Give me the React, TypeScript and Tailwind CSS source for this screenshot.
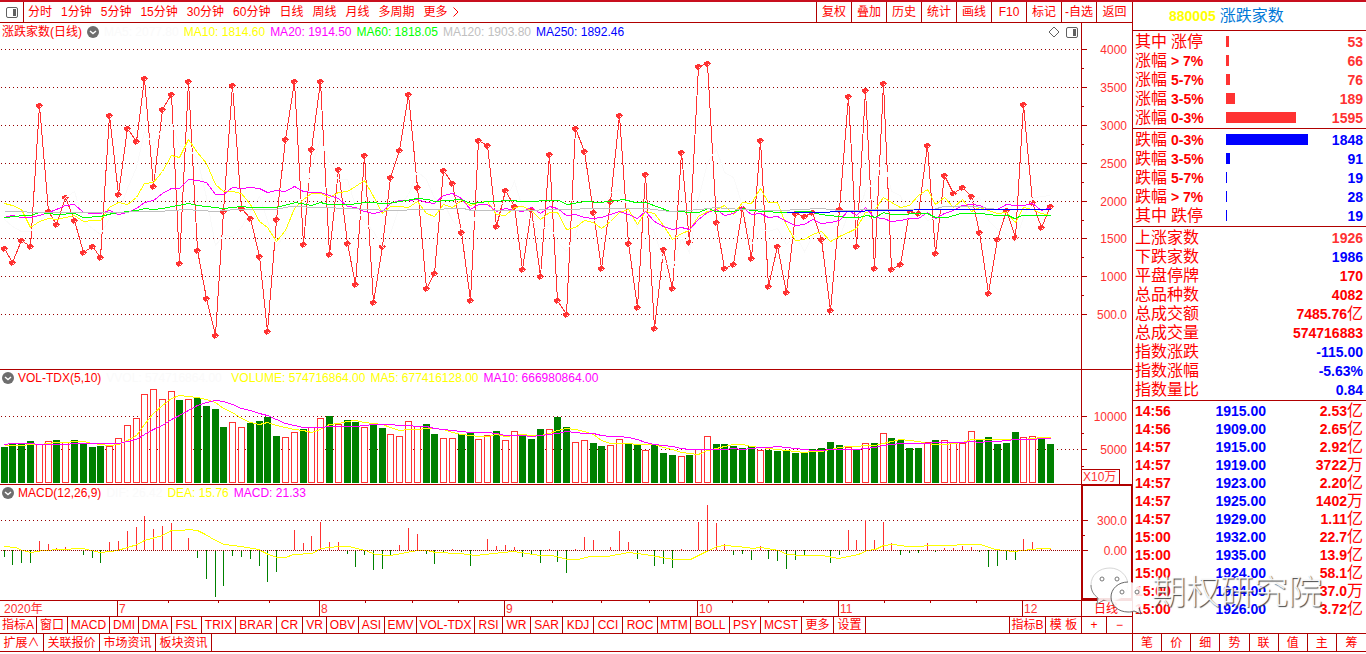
import React from "react";

const PRICE = [
  248, 262, 240, 246, 105, 211, 224, 197, 220, 252, 246, 257, 115, 194, 128, 141, 78, 186, 109, 94,
  263, 81, 250, 298, 335, 211, 85, 208, 218, 256, 331, 219, 139, 81, 244, 149, 81, 254, 169, 243,
  284, 155, 302, 246, 177, 150, 94, 187, 288, 273, 170, 183, 232, 300, 140, 145, 226, 190, 206, 269,
  209, 276, 154, 300, 314, 128, 151, 212, 268, 201, 115, 243, 307, 174, 328, 249, 288, 152, 242, 66,
  63, 222, 268, 264, 208, 258, 140, 286, 246, 292, 213, 216, 212, 239, 310, 209, 96, 246, 90, 268,
  83, 269, 264, 211, 213, 145, 253, 175, 193, 187, 196, 232, 293, 239, 210, 237, 104, 202, 227, 206,
];

const VOLUME =
  "G447 G444 G444 G441 R444 R441 G440 R442 G440 G444 G447 G446 R446 R438 R425 R418 R394 R389 R399 R391 " +
  "G400 R399 G398 G406 G409 G427 R422 R427 G423 G421 G417 G436 R437 R432 G429 R427 R418 G416 R424 G420 " +
  "G422 R427 G424 G428 R434 R436 R421 R426 G424 G434 R438 R438 G434 G433 R439 R435 G431 R440 R431 G435 " +
  "G439 G429 R429 G417 G427 R442 R440 G443 G446 R445 R439 G444 G444 R450 G445 G453 G455 R456 G455 R449 " +
  "R436 G444 G444 G446 G448 G446 R450 G450 G451 G451 G453 G453 G449 G448 G442 G445 R447 G449 R443 G443 " +
  "R433 G438 G440 G448 G448 R442 G440 R440 R443 R443 R431 G440 G437 G444 G443 G432 R437 R436 G438 G444";

const MACD = [
  578, 600, 596, 596, 528, 537, 549, 546, 556, 572, 581, 594, 531, 528, 498, 486, 453, 492, 483, 474,
  556, 519, 581, 644, 698, 665, 575, 578, 584, 605, 653, 623, 560, 495, 534, 513, 471, 531, 531, 567,
  608, 570, 617, 614, 575, 540, 489, 507, 567, 599, 563, 552, 563, 605, 556, 522, 543, 540, 546, 578,
  570, 596, 552, 593, 626, 552, 516, 525, 556, 546, 498, 531, 584, 556, 605, 599, 611, 552, 556, 471,
  420, 474, 537, 570, 567, 587, 543, 584, 590, 614, 587, 570, 556, 560, 596, 570, 495, 525, 465, 525,
  471, 534, 570, 566, 566, 534, 563, 549, 549, 543, 546, 563, 608, 605, 587, 587, 522, 531, 549, 553,
].map((v) => Math.round((v - 556) / 3));

const MA60 =
  "4,217 15,216 22,215 30,215 39,212 57,214 74,213 83,217 100,216 112,213 127,211 137,210 144,208 153,209 162,208 188,203 197,205 223,208 241,206 250,207 276,207 295,202 311,205 320,202 328,204 350,204 364,202 388,203 417,198 428,199 434,201 460,199 471,203 488,201 513,200 519,201 558,200 567,204 585,201 600,202 623,199 635,202 645,202 670,211 698,212 708,208 715,211 733,211 743,208 750,210 780,212 810,211 820,214 847,217 858,217 867,215 875,217 883,212 890,214 927,213 935,217 947,217 960,213 980,213 997,215 1008,215 1014,218 1022,215 1050,215";
const MA120 =
  "4,211 22,211 30,212 100,212 158,211 185,209 215,211 235,209 275,209 290,206 320,207 350,208 388,210 463,208 471,210 518,210 600,208 645,208 670,211 700,209 715,207 725,208 743,209 780,210 800,209 820,208 840,210 880,209 933,209 943,206 973,206 997,209 1050,209";
const MA250 = "786,212 800,212 860,211 870,210 958,209 1050,209";
const DEA =
  "4,546 15,547 22,550 31,552 43,550 60,549 82,548 100,552 110,551 117,550 127,547 137,544 144,540 162,535 171,530 182,530 187,529 197,530 205,534 215,540 224,544 240,546 258,549 268,554 277,557 285,557 293,554 312,553 320,548 338,546 348,546 365,550 375,554 390,555 417,550 427,550 435,552 460,553 475,555 493,553 513,551 540,555 552,555 567,559 577,559 590,556 607,556 628,552 645,554 673,559 690,559 708,550 717,546 725,545 747,547 752,548 760,547 778,550 787,554 802,555 822,555 838,558 858,554 867,550 875,549 883,545 893,544 907,546 920,546 928,545 953,545 960,544 980,544 995,549 1013,551 1040,548 1050,548";

const xAt = (i: number) => Math.round(3.7 + i * 8.79);
const toPoints = (ys: number[]) => ys.map((y, i) => `${xAt(i)},${Math.round(y)}`).join(" ");
const average = (ys: number[], n: number, head: number[]) =>
  ys.map((_, i) => (i < n - 1 ? head[Math.min(i, head.length - 1)] : ys.slice(i - n + 1, i + 1).reduce((a, b) => a + b, 0) / n));

const bars = VOLUME.split(" ").map((s) => ({ up: s[0] === "R", y: Number(s.slice(1)) }));
const volY = bars.map((b) => b.y);

const priceMa5 = toPoints(average(PRICE, 5, [219, 226, 231, 231]));
const priceMa10 = toPoints(average(PRICE, 10, [203, 205, 209, 227, 221, 218, 219, 217, 215]));
const priceMa20 = toPoints(
  average(PRICE, 20, [217, 215, 217, 217, 215, 212, 209, 205, 204, 212, 213, 213, 210, 214, 212, 208, 202, 200, 193]),
);
const volMa5 = toPoints(average(volY, 5, [445, 445, 445, 444]));
const volMa10 = toPoints(average(volY, 10, [444, 443, 443, 443, 444, 444, 444, 444, 443]));

const periods = ["分时", "1分钟", "5分钟", "15分钟", "30分钟", "60分钟", "日线", "周线", "月线", "多周期", "更多"];
const tools = ["复权", "叠加", "历史", "统计", "画线", "F10", "标记", "-自选"];

const indicators: [string, string][] = [
  ["指标A", "w-[37px]"], ["窗口", "w-[31px]"], ["MACD", "w-[42px]"], ["DMI", "w-[29px]"], ["DMA", "w-[33px]"],
  ["FSL", "w-[30px]"], ["TRIX", "w-[34px]"], ["BRAR", "w-[41px]"], ["CR", "w-[26px]"], ["VR", "w-[24px]"],
  ["OBV", "w-[32px]"], ["ASI", "w-[26px]"], ["EMV", "w-[32px]"], ["VOL-TDX", "w-[58px]"], ["RSI", "w-[28px]"],
  ["WR", "w-[28px]"], ["SAR", "w-[32px]"], ["KDJ", "w-[31px]"], ["CCI", "w-[29px]"], ["ROC", "w-[35px]"],
  ["MTM", "w-[33px]"], ["BOLL", "w-[39px]"], ["PSY", "w-[31px]"], ["MCST", "w-[41px]"], ["更多", "w-[32px]"],
  ["设置", "w-[32px]"],
];

const rises = [
  ["其中", "涨停", "53", "w-[3px]"],
  ["涨幅", "> 7%", "66", "w-[3px]"],
  ["涨幅", "5-7%", "76", "w-[4px]"],
  ["涨幅", "3-5%", "189", "w-[9px]"],
  ["涨幅", "0-3%", "1595", "w-[70px]"],
];
const falls = [
  ["跌幅", "0-3%", "1848", "w-[82px]"],
  ["跌幅", "3-5%", "91", "w-[4px]"],
  ["跌幅", "5-7%", "19", "w-px"],
  ["跌幅", "> 7%", "28", "w-px"],
  ["其中", "跌停", "19", "w-px"],
];
const totals = [
  ["上涨家数", "1926", "", "text-[#ff3232]"],
  ["下跌家数", "1986", "", "text-[#0000ff]"],
  ["平盘停牌", "170", "", "text-[#ff0000]"],
  ["总品种数", "4082", "", "text-[#ff0000]"],
  ["总成交额", "7485.76", "亿", "text-[#ff0000]"],
  ["总成交量", "574716883", "", "text-[#ff0000]"],
  ["指数涨跌", "-115.00", "", "text-[#0000ff]"],
  ["指数涨幅", "-5.63%", "", "text-[#0000ff]"],
  ["指数量比", "0.84", "", "text-[#0000ff]"],
];
const ticks = [
  ["14:56", "1915.00", "2.53", "亿"], ["14:56", "1909.00", "2.65", "亿"], ["14:57", "1915.00", "2.92", "亿"],
  ["14:57", "1919.00", "3722", "万"], ["14:57", "1923.00", "2.20", "亿"], ["14:57", "1925.00", "1402", "万"],
  ["14:57", "1929.00", "1.11", "亿"], ["15:00", "1932.00", "22.7", "亿"], ["15:00", "1935.00", "13.9", "亿"],
  ["15:00", "1924.00", "58.1", "亿"], ["15:00", "1924.00", "37.0", "万"], ["15:00", "1926.00", "3.72", "亿"],
];

const months: [number, string][] = [[117, "7"], [319, "8"], [504, "9"], [697, "10"], [838, "11"], [1022, "12"]];
const weeks = [168, 218, 269, 365, 412, 458, 552, 601, 649, 732, 768, 803, 884, 930, 976];

function PanelIcon() {
  return (
    <svg width="12" height="11" viewBox="0 0 12 11" aria-hidden="true">
      <rect x="0.5" y="0.5" width="11" height="10" rx="1.5" fill="#fff" stroke="#606060" />
      <rect x="7" y="2" width="3" height="7" fill="#606060" />
    </svg>
  );
}

function CollapseButton({ label }: { label: string }) {
  return (
    <button aria-label={label} className="flex shrink-0">
      <svg width="12" height="12" viewBox="0 0 12 12" aria-hidden="true">
        <circle cx="6" cy="6" r="6" fill="#6e6e6e" />
        <path d="M3 5l3 2.6L9 5" fill="none" stroke="#fff" strokeWidth="1.4" />
      </svg>
    </button>
  );
}

function Grid({ y, dash = "1 3" }: { y: number; dash?: string }) {
  return <line x1="1" x2="1081" y1={y + 0.5} y2={y + 0.5} stroke="#960000" strokeDasharray={dash} />;
}

function Line({ points, className }: { points: string; className: string }) {
  return <polyline points={points} fill="none" className={className} transform="translate(0.5 0.5)" />;
}

type AxisProps = { top: number; height: number; labelX?: number; major: [number, string][]; minor: number[] };

function Axis({ top, height, labelX = 45, major, minor }: AxisProps) {
  return (
    <svg width="48" height={height} viewBox={`0 ${top} 48 ${height}`} className="block shrink-0 fill-[#ff3232] text-[12px]">
      {major.map(([y, t]) => (
        <g key={t}>
          <rect x="0" y={y} width="5" height="1" fill="#b00000" />
          <text x={labelX} y={y + 5} textAnchor="end">{t}</text>
        </g>
      ))}
      {minor.map((y) => (
        <rect key={y} x="0" y={y} width="2" height="1" fill="#b00000" />
      ))}
    </svg>
  );
}

function Spread({ rows, bar, value }: { rows: string[][]; bar: string; value: string }) {
  return (
    <ul className="border-b border-[#b00000] py-px">
      {rows.map(([group, range, count, width]) => (
        <li key={group + range} className="flex h-[19px] items-center pr-[3px] pl-[2px]">
          <span className="flex w-[91px] items-center gap-[4px] text-[16px]">
            {group}
            {range.includes("%") ? <b className="text-[14px]">{range}</b> : <span>{range}</span>}
          </span>
          <span className={`h-[11px] ${width} ${bar}`} />
          <b className={`ml-auto text-[14px] ${value}`}>{count}</b>
        </li>
      ))}
    </ul>
  );
}

function Watermark() {
  return (
    <div className="pointer-events-none absolute right-[44px] bottom-[37px] flex items-center gap-[6px]">
      <svg width="56" height="48" viewBox="0 0 56 48" className="mb-[2px]" aria-hidden="true">
        <path
          d="M20 1C9 1 1 8 1 18c0 6 3 10 7 13l-1 6 7-4c2 1 4 1 6 1 10 0 18-7 18-16S30 1 20 1z"
          fill="#fff" fillOpacity="0.88" stroke="#c4c4c4" strokeWidth="0.7"
        />
        <path d="M1 18c0 6 3 10 7 13l-1 6 7-4" fill="none" stroke="#777" strokeWidth="0.8" />
        <path
          d="M38 15c-10 0-17 7-17 15s7 15 17 15c2 0 4 0 6-1l7 3-2-6c3-3 5-6 5-11 0-8-6-15-16-15z"
          fill="#fff" fillOpacity="0.88"
        />
        <path d="M38 15c-10 0-17 7-17 15s7 15 17 15c2 0 4 0 6-1l7 3-2-6" fill="none" stroke="#555" strokeWidth="0.9" />
        <g fill="#fff" stroke="#777" strokeWidth="1">
          <circle cx="12" cy="12" r="2" />
          <circle cx="27" cy="12" r="2" />
          <circle cx="32" cy="25" r="2" />
          <circle cx="47" cy="25" r="2" />
        </g>
      </svg>
      <span className="text-[34px] leading-[48px] font-light text-white/90 [text-shadow:1px_1px_1px_#444]">期权研究院</span>
    </div>
  );
}

export default function App() {
  return (
    <div className="relative flex min-h-screen flex-col bg-white font-['Liberation_Sans','Noto_Sans_CJK_SC',sans-serif] text-[12px] leading-[16px] whitespace-nowrap text-[#ff0000]">
      <div className="h-[2px] bg-[#c80f1e]" />
      <div className="relative flex">
        <main className="min-w-0 flex-1">
          <nav className="flex h-[21px] border-b border-[#b00000]">
            <button aria-label="侧栏" className="flex w-[24px] items-center justify-center border-r border-[#b00000]">
              <PanelIcon />
            </button>
            <div className="flex flex-1 items-center gap-[9px] pl-[4px]">
              {periods.map((p) => (
                <button key={p}>{p}</button>
              ))}
              <svg width="6" height="10" viewBox="0 0 6 10" className="-ml-[4px]" aria-hidden="true">
                <path d="M0.5 0.5L5 5L0.5 9.5" fill="none" stroke="#ff0000" />
              </svg>
            </div>
            {tools.map((t) => (
              <button key={t} className="w-[35px] border-l border-[#b00000]">{t}</button>
            ))}
            <button className="w-[36px] border-l border-[#b00000]">返回</button>
          </nav>

          <section className="flex border-b border-[#b00000]">
            <div className="min-w-0 flex-1 border-r border-[#b00000]">
              <header className="flex h-[18px] items-center gap-[5px] pr-[3px] pl-[2px]">
                <h2>涨跌家数(日线)</h2>
                <CollapseButton label="收起涨跌家数" />
                <span className="text-[#fafafa]">MA5: 2077.80</span>
                <span className="text-[#ffff00]">MA10: 1814.60</span>
                <span className="text-[#ff00ff]">MA20: 1914.50</span>
                <span className="text-[#00ff00]">MA60: 1818.05</span>
                <span className="text-[#c0c0c0]">MA120: 1903.80</span>
                <span className="text-[#0000ff]">MA250: 1892.46</span>
                <svg width="12" height="12" viewBox="0 0 12 12" className="ml-auto" aria-hidden="true">
                  <path d="M6 1L11 6L6 11L1 6Z" fill="none" stroke="#606060" />
                </svg>
                <span className="ml-px"><PanelIcon /></span>
              </header>
              <svg viewBox="0 41 1081 328" preserveAspectRatio="none" shapeRendering="crispEdges" className="block h-[328px] w-full">
                {[49, 87, 125, 163, 201, 238, 276, 314].map((y) => <Grid key={y} y={y} />)}
                <Line points={toPoints(PRICE)} className="stroke-[#ff3232]" />
                {PRICE.map((y, i) => (
                  <g key={i}>
                    <path d={`M${xAt(i) - 1} ${y - 2}h3v1h1v1h1v1h-1v1h-1v1h-2v1h-1v-1h-1v-1h-1v-3h1z`} fill="#ff3232" />
                    <rect x={xAt(i) + 1} y={y + 1} width="1" height="1" fill="#fff" />
                  </g>
                ))}
                <Line points={priceMa5} className="stroke-[#fafafa]" />
                <Line points={priceMa10} className="stroke-[#ffff00]" />
                <Line points={priceMa20} className="stroke-[#ff00ff]" />
                <Line points={MA60} className="stroke-[#00ff00]" />
                <Line points={MA120} className="stroke-[#c0c0c0]" />
                <Line points={MA250} className="stroke-[#0000ff]" />
              </svg>
            </div>
            <div className="w-[50px]">
              <Axis
                top={23} height={346}
                major={[[49, "4000"], [87, "3500"], [125, "3000"], [163, "2500"], [201, "2000"], [238, "1500"], [276, "1000"], [314, "500.0"]]}
                minor={[68, 106, 144, 182, 220, 257, 295]}
              />
            </div>
          </section>

          <section className="relative flex border-b border-[#b00000]">
            <div className="min-w-0 flex-1 border-r border-[#b00000]">
              <header className="flex h-[16px] items-center gap-[5px] pl-[2px]">
                <CollapseButton label="收起成交量" />
                <h2 className="-ml-px">VOL-TDX(5,10)</h2>
                <span className="w-[120px] text-[#fafafa]">VVOL: 574716864.00</span>
                <span className="text-[#ffff00]">VOLUME: 574716864.00</span>
                <span className="text-[#ffff00]">MA5: 677416128.00</span>
                <span className="text-[#ff00ff]">MA10: 666980864.00</span>
              </header>
              <svg viewBox="0 386 1081 98" preserveAspectRatio="none" shapeRendering="crispEdges" className="block h-[98px] w-full">
                <Grid y={416} />
                <Grid y={449} />
                {bars.map((b, i) =>
                  b.up ? (
                    <rect key={i} x={xAt(i) - 2.5} y={b.y + 0.5} width="6" height={482 - b.y} fill="#fff" stroke="#ff3232" />
                  ) : (
                    <rect key={i} x={xAt(i) - 3} y={b.y} width="7" height={483 - b.y} fill="#008000" />
                  ),
                )}
                <Line points={volMa5} className="stroke-[#ffff00]" />
                <Line points={volMa10} className="stroke-[#ff00ff]" />
              </svg>
            </div>
            <div className="w-[50px]">
              <Axis top={370} height={114} major={[[416, "10000"], [449, "5000"]]} minor={[433, 466]} />
            </div>
            <span className="absolute right-[12px] bottom-0 h-[15px] w-[38px] border-t border-r border-[#b00000] bg-white pl-px leading-[14px] text-[#ff3232]">
              X10万
            </span>
          </section>

          <section className="flex border-b border-[#b00000]">
            <div className="min-w-0 flex-1">
              <header className="flex h-[16px] items-center gap-[5px] pl-[2px]">
                <CollapseButton label="收起MACD" />
                <h2 className="-ml-px">MACD(12,26,9)</h2>
                <span className="text-[#fafafa]">DIF: 26.42</span>
                <span className="text-[#ffff00]">DEA: 15.76</span>
                <span className="text-[#ff00ff]">MACD: 21.33</span>
              </header>
              <svg viewBox="0 501 1081 99" preserveAspectRatio="none" shapeRendering="crispEdges" className="block h-[99px] w-full">
                <Grid y={520} />
                {MACD.map((v, i) => (
                  <rect key={i} x={xAt(i)} y={v < 0 ? 550 + v : 550} width="1" height={Math.abs(v)} fill={v < 0 ? "#ff3232" : "#008000"} />
                ))}
                <Line points={DEA} className="stroke-[#ffff00]" />
                <Grid y={550} dash="1 1" />
              </svg>
            </div>
            <div className="-mt-px w-[51px] border-2 border-r border-[#b00000]">
              <Axis top={486} height={112} labelX={44} major={[[520, "300.0"], [550, "0.00"]]} minor={[535]} />
            </div>
          </section>

          <div className="flex h-[16px] border-b border-[#b00000]">
            <div className="min-w-0 flex-1 border-r border-[#b00000]">
              <svg viewBox="0 601 1081 15" preserveAspectRatio="none" className="block h-[15px] w-full fill-[#ff3232]">
                <text x="4" y="613">2020年</text>
                {months.map(([x, t]) => (
                  <g key={t}>
                    <rect x={x} y="601" width="1" height="15" fill="#b00000" />
                    <text x={x + 2} y="613">{t}</text>
                  </g>
                ))}
                {weeks.map((x) => <rect key={x} x={x} y="601" width="1" height="2" fill="#b00000" />)}
              </svg>
            </div>
            <span className="w-[50px] pl-[12px]">日线</span>
          </div>

          <nav className="flex h-[17px] border-b border-[#b00000]">
            {indicators.map(([t, w]) => (
              <button key={t} className={`${w} border-r border-[#b00000]`}>{t}</button>
            ))}
            <button className="ml-auto w-[37px] border-x border-[#b00000]">指标B</button>
            <button className="w-[36px] border-r border-[#b00000]">模 板</button>
            <button className="w-[25px] border-r border-[#b00000]">+</button>
            <button className="w-[25px]">−</button>
          </nav>
          <nav className="flex h-[18px] border-b border-[#b00000]">
            <button className="w-[44px] border-r border-[#b00000]">扩展∧</button>
            <button className="w-[56px] border-r border-[#b00000]">关联报价</button>
            <button className="w-[56px] border-r border-[#b00000]">市场资讯</button>
            <button className="w-[56px] border-r border-[#b00000]">板块资讯</button>
          </nav>
        </main>

        <aside className="flex w-[234px] shrink-0 flex-col border-l border-[#b00000]">
          <h1 className="flex h-[29px] items-center gap-[4px] border-b border-[#b00000] pl-[36px] text-[16px] text-[#0078d7]">
            <b className="text-[14px] text-[#ffff00]">880005</b>涨跌家数
          </h1>
          <Spread rows={rises} bar="bg-[#ff3232]" value="text-[#ff3232]" />
          <Spread rows={falls} bar="bg-[#0000ff]" value="text-[#0000ff]" />
          <dl className="border-b border-[#b00000] py-px">
            {totals.map(([name, value, unit, color]) => (
              <div key={name} className={`flex h-[19px] items-center pr-[3px] pl-[2px] text-[16px] ${color}`}>
                <dt className="text-[#ff0000]">{name}</dt>
                <dd className="ml-auto flex items-center"><b className="text-[14px]">{value}</b>{unit}</dd>
              </div>
            ))}
          </dl>
          <table className="mt-px w-full border-collapse text-[14px] font-bold">
            <tbody>
              {ticks.map(([time, price, amount, unit], i) => (
                <tr key={i} className="h-[18px]">
                  <td className="w-[70px] py-0 pl-[2px]">{time}</td>
                  <td className="w-[63px] py-0 text-right text-[#0000ff]">{price}</td>
                  <td className="py-0 pr-[3px]">
                    <span className="flex items-center justify-end">{amount}<span className="text-[16px] font-normal">{unit}</span></span>
                  </td>
                </tr>
              ))}
            </tbody>
          </table>
          <nav className="mt-auto grid h-[19px] grid-cols-8 divide-x divide-[#b00000] border-y border-[#b00000]">
            {["笔", "价", "细", "势", "联", "值", "主", "筹"].map((t) => <button key={t}>{t}</button>)}
          </nav>
        </aside>
        <div className="pointer-events-none absolute inset-x-0 top-0 -bottom-[2px]">
          <Watermark />
        </div>
      </div>
    </div>
  );
}
